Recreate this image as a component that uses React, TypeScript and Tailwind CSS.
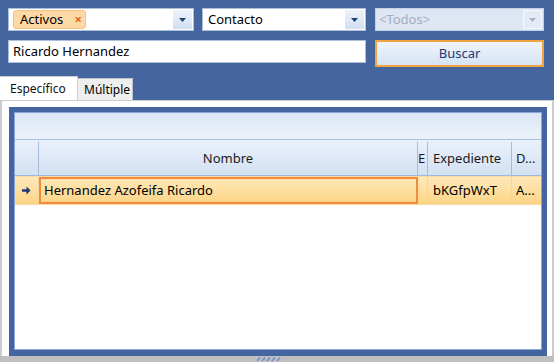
import React from "react";

const FONT = { fontFamily: '"Noto Sans", "Open Sans", Arial, sans-serif' };

function DropButton({ disabled }: { disabled?: boolean }) {
  return (
    <div
      className={
        "flex h-full w-[19px] items-center justify-center " +
        (disabled
          ? "bg-[#e4ebf5] border border-[#f4f7fb]"
          : "bg-gradient-to-b from-[#eef3fb] to-[#d2dff1]")
      }
    >
      <svg width="7" height="4" viewBox="0 0 7 4">
        <path d="M0 0 H7 L3.5 4 Z" fill={disabled ? "#a9b3c4" : "#1e3f7a"} />
      </svg>
    </div>
  );
}

function Grip() {
  return (
    <svg width="24" height="5" viewBox="0 0 24 5">
      {[0, 5, 10, 15, 20].map((x) => (
        <path key={x} d={`M${x} 4 L${x + 3} 0.5`} stroke="#6f8fc8" strokeWidth="1.6" />
      ))}
    </svg>
  );
}

export default function App() {
  return (
    <div className="h-[362px] w-[554px] overflow-hidden bg-[#45659f] text-[13px] text-black" style={FONT}>
      <div className="flex flex-col px-2 pt-2">
        <div className="flex h-[23px] gap-[8px]">
          <div className="flex w-[186px] items-stretch border border-[#a9bfdc] bg-white p-[1px]">
            <div className="flex flex-1 items-center pl-[3px]">
              <span className="flex h-[19px] w-[73px] items-center rounded-[3px] border border-[#f5c27e] bg-[#fdd9a6] pl-[6px]">
                <span className="flex-1">Activos</span>
                <span className="mr-[3px] text-[13px] font-bold leading-none text-[#e0661e]">×</span>
              </span>
            </div>
            <DropButton />
          </div>
          <div className="flex w-[164px] items-stretch border border-[#a9bfdc] bg-white p-[1px]">
            <div className="flex flex-1 items-center pl-[4px]">Contacto</div>
            <DropButton />
          </div>
          <div className="ml-[1px] flex w-[169px] items-stretch border border-[#c3d2e6] bg-[#dde6f2] p-[1px]">
            <div className="flex flex-1 items-center pl-[2px] text-[#a3aec0]">&lt;Todos&gt;</div>
            <DropButton disabled />
          </div>
        </div>
        <div className="mt-[9px] flex gap-[9px]">
          <div className="flex h-[23px] w-[358px] items-center border border-[#a9bfdc] bg-white pl-[4px]">
            Ricardo Hernandez
          </div>
          <button className="flex h-[27px] w-[169px] items-center justify-center border-2 border-[#f3a43d] bg-gradient-to-b from-[#eef4fc] via-[#e2ecf8] to-[#d4e3f5] text-[#1f3a73]">
            Buscar
          </button>
        </div>
      </div>

      <div className="mt-[9px] flex h-[24px] items-end text-[12px]">
        <div className="flex h-[24px] w-[78px] items-center border-r border-t border-[#c9ced6] bg-white pl-[10px] text-[#111]">
          Específico
        </div>
        <div className="flex h-[22px] w-[55px] items-center border-r border-t border-[#c0c4cb] bg-[#eeeeee] pl-[6px]">
          Múltiple
        </div>
      </div>

      <div className="flex h-[256px] flex-col border-x-2 border-t border-[#c9cbcf] bg-white pl-[7px] pr-[5px] pt-[6px]">
        <div className="flex flex-1 flex-col border-[5px] border-b-[6px] border-[#4565a0]">
          <div className="flex flex-1 flex-col border border-[#87a8dd]">
            <div className="h-[27px] border-b border-[#a7c0e3] bg-gradient-to-b from-[#dbe6f5] to-[#ecf2fa]" />
            <div className="flex h-[36px] border-b border-[#9fb8da] bg-gradient-to-b from-[#ebf1fb] to-[#d3e1f3] pt-[2px] text-[#1b1b1b]">
              <div className="w-[24px] border-r border-[#a5bcd9]" />
              <div className="flex w-[379px] items-center justify-center border-r border-[#a5bcd9]">Nombre</div>
              <div className="flex w-[10px] items-center overflow-hidden border-r border-[#a5bcd9]">E</div>
              <div className="flex w-[84px] items-center border-r border-[#a5bcd9] pl-[5px]">Expediente</div>
              <div className="flex flex-1 items-center pl-[4px]">D...</div>
            </div>
            <div className="flex h-[29px] border-b border-t border-[#fbd9a0] bg-gradient-to-b from-[#fee9b8] to-[#fdd486]">
              <div className="flex w-[24px] items-center justify-center border-r border-[#f6d49d]">
                <svg width="9" height="9" viewBox="0 0 9 9">
                  <path d="M0 3.3 H4.5 V0.5 L8.6 4.5 L4.5 8.5 V5.7 H0 Z" fill="#1e3c78" />
                </svg>
              </div>
              <div className="flex w-[379px] items-center border-2 border-[#f08c3c] pl-[3px]">
                Hernandez Azofeifa Ricardo
              </div>
              <div className="w-[10px] border-r border-[#f6d49d]" />
              <div className="flex w-[84px] items-center border-r border-[#f6d49d] pl-[5px]">bKGfpWxT</div>
              <div className="flex flex-1 items-center pl-[4px]">A...</div>
            </div>
            <div className="flex-1 bg-white" />
          </div>
        </div>
      </div>
      <div className="flex h-[6px] items-center justify-center bg-[#bfbfbf] pr-[16px]">
        <Grip />
      </div>
    </div>
  );
}
